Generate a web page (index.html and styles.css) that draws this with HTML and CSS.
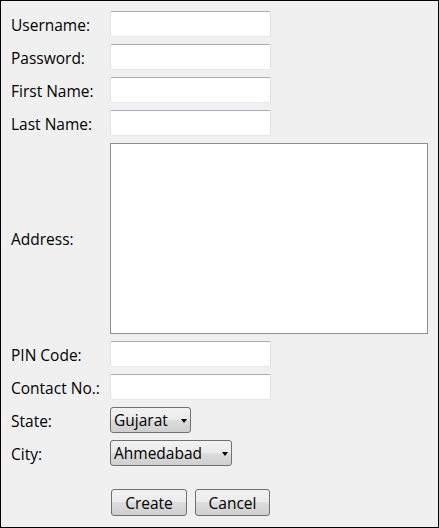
FILE: index.html
```html
<!DOCTYPE html>
<html>
<head>
<meta charset="utf-8">
<link rel="stylesheet" href="styles.css">
</head>
<body>
<div class="window">
  <form class="form">
    <label class="lbl">Username:</label>
    <input class="txt" type="text">
    <label class="lbl">Password:</label>
    <input class="txt" type="password">
    <label class="lbl">First Name:</label>
    <input class="txt" type="text">
    <label class="lbl">Last Name:</label>
    <input class="txt" type="text">
    <label class="lbl">Address:</label>
    <textarea class="area"></textarea>
    <label class="lbl">PIN Code:</label>
    <input class="txt" type="text">
    <label class="lbl">Contact No.:</label>
    <input class="txt" type="text">
    <label class="lbl">State:</label>
    <span class="sel-wrap state"><select class="sel"><option>Gujarat</option></select></span>
    <label class="lbl">City:</label>
    <span class="sel-wrap city"><select class="sel"><option>Ahmedabad</option></select></span>
    <span class="spacer"></span>
    <div class="buttons">
      <button type="button" class="btn create">Create</button>
      <button type="button" class="btn cancel">Cancel</button>
    </div>
  </form>
</div>
</body>
</html>
```
FILE: styles.css
```css
html, body {
  margin: 0;
  padding: 0;
  background: #f0f0f0;
}
.window {
  box-sizing: border-box;
  width: 439px;
  height: 528px;
  border: 1px solid #000;
  background: #f0f0f0;
  padding: 10px 0 0 10px;
  font-family: "Open Sans", "DejaVu Sans", sans-serif;
  font-size: 15.5px;
  color: #000;
}
.form {
  display: grid;
  grid-template-columns: 99px auto;
  row-gap: 7px;
  align-items: center;
  justify-items: start;
  margin: 0;
}
.lbl {
  white-space: nowrap;
  line-height: 18px;
  padding-top: 1px;
}
.txt {
  box-sizing: border-box;
  width: 161px;
  height: 26px;
  margin: 0;
  padding: 0 3px;
  background: #fff;
  border: 1px solid;
  border-color: #abadb3 #dbdfe6 #e3e9ef #e2e3ea;
  border-radius: 2px;
  outline: none;
  font: inherit;
}
.area {
  box-sizing: border-box;
  width: 318px;
  height: 191px;
  margin: 0;
  padding: 2px;
  background: #fff;
  border: 1px solid #8e8f94;
  border-radius: 0;
  resize: none;
  outline: none;
  font: inherit;
}
.sel-wrap {
  position: relative;
  display: block;
  height: 26px;
}
.sel-wrap.state { width: 81px; }
.sel-wrap.city { width: 122px; }
.sel-wrap::after {
  content: "";
  position: absolute;
  right: 4px;
  top: 12px;
  width: 0;
  height: 0;
  border-left: 3.5px solid transparent;
  border-right: 3.5px solid transparent;
  border-top: 4px solid #000;
  pointer-events: none;
}
.sel {
  -webkit-appearance: none;
  appearance: none;
  box-sizing: border-box;
  width: 100%;
  height: 26px;
  margin: 0;
  padding: 0 0 0 3px;
  border: 1px solid #707070;
  border-radius: 3px;
  background: linear-gradient(#f2f2f2 0%, #ebebeb 50%, #dddddd 50%, #cfcfcf 100%);
  font: inherit;
  color: #000;
  outline: none;
}
.spacer {
  height: 26px;
}
.buttons {
  display: flex;
  gap: 8px;
  margin-top: 16px;
  margin-left: 1px;
}
.btn {
  box-sizing: border-box;
  height: 27px;
  margin: 0;
  padding: 0;
  border: 1px solid #707070;
  border-radius: 3px;
  background: linear-gradient(#f2f2f2 0%, #ebebeb 50%, #dddddd 50%, #cfcfcf 100%);
  font: inherit;
  color: #000;
}
.btn.create { width: 76px; }
.btn.cancel { width: 75px; }
```
